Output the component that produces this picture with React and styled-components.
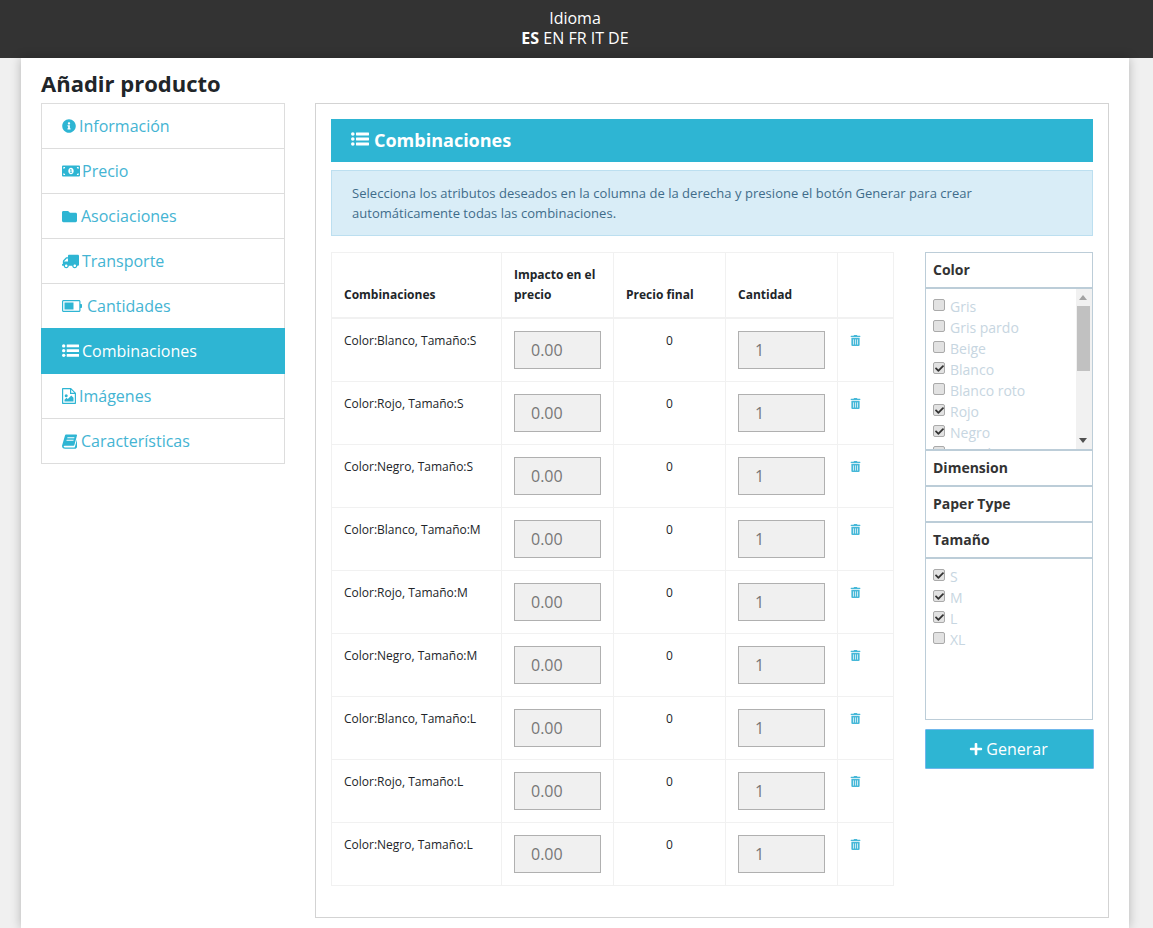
import React from "react"
import styled, { createGlobalStyle } from "styled-components"
import { FaInfoCircle, FaMoneyBillAlt, FaFolder, FaTruck, FaTrashAlt, FaPlus, FaCheck } from "react-icons/fa"

const Global = createGlobalStyle`
  html, body {
    margin: 0;
    background: #f0f0f0;
    font-family: "Open Sans", "Liberation Sans", sans-serif;
  }
  * { box-sizing: border-box; }
`

const TopBar = styled.header`
  height: 58px;
  background: #333;
  color: #fff;
  font-size: 16px;
  line-height: 20px;
  text-align: center;
  padding: 8px 3px 0 0;
  b { font-weight: 700; }
`

const Sheet = styled.main`
  width: 1108px;
  margin-left: 21px;
  height: 870px;
  background: #fff;
  padding: 11px 20px 0;
  box-shadow: 0 0 10px rgba(0, 0, 0, 0.25);
  overflow: hidden;
`

const Title = styled.h1`
  margin: 0 0 5px;
  font-size: 22px;
  line-height: 29px;
  font-weight: 700;
  color: #212529;
`

const Columns = styled.div`
  display: flex;
  align-items: flex-start;
  gap: 30px;
`

const Menu = styled.nav`
  width: 244px;
  flex: none;
`

const MenuItem = styled.a`
  display: flex;
  align-items: center;
  height: 46px;
  margin-top: -1px;
  padding-left: 20px;
  border: 1px solid ${p => (p.$active ? "#2eb5d3" : "#ddd")};
  background: ${p => (p.$active ? "#2eb5d3" : "#fff")};
  color: ${p => (p.$active ? "#fff" : "#44b4d3")};
  font-size: 16px;
  position: relative;
  z-index: ${p => (p.$active ? 1 : 0)};
  &:first-child { margin-top: 0; }
  svg { margin-right: ${p => p.$gap}px; color: ${p => (p.$active ? "#fff" : "#2eb5d3")}; flex: none; }
`

const Panel = styled.section`
  width: 794px;
  height: 815px;
  border: 1px solid #d3d3d3;
  padding: 15px;
`

const PanelHead = styled.h2`
  margin: 0 0 8px;
  height: 43px;
  display: flex;
  align-items: center;
  padding: 0 0 2px 20px;
  background: #2eb5d3;
  color: #fff;
  font-size: 18px;
  font-weight: 700;
  svg { margin-right: 5px; }
`

const Notice = styled.p`
  margin: 0 0 16px;
  height: 66px;
  padding: 12px 20px;
  background: #d9edf7;
  border: 1px solid #bcdff0;
  color: #3f6c8a;
  font-size: 13px;
  line-height: 20px;
  letter-spacing: 0.03px;
`

const Body = styled.div`
  display: flex;
  align-items: flex-start;
  justify-content: space-between;
`

const Table = styled.table`
  width: 563px;
  border-collapse: collapse;
  table-layout: fixed;
  font-size: 12px;
  color: #212529;
`

const Th = styled.th`
  height: 65px;
  padding: 12px;
  width: ${p => p.$w}px;
  border: 1px solid #f1f1f1;
  border-bottom-width: 2px;
  text-align: left;
  vertical-align: bottom;
  font-size: 12px;
  line-height: 20px;
  font-weight: 700;
`

const Td = styled.td`
  height: 63px;
  padding: 12px;
  border: 1px solid #f1f1f1;
  vertical-align: top;
  line-height: 20px;
  text-align: ${p => (p.$center ? "center" : "left")};
`

const Field = styled.input`
  display: block;
  width: 87px;
  height: 38px;
  padding: 0 16px;
  background: #f0f0f0;
  border: 1px solid #b0b0b0;
  color: #777;
  font: 16px "Open Sans", sans-serif;
`

const Trash = styled(FaTrashAlt)`
  color: #46b8d8;
  font-size: 11px;
  display: block;
  margin-top: 4px;
`

const Side = styled.aside`
  width: 168px;
  flex: none;
`

const GroupHead = styled.div`
  height: 36px;
  padding: 0 0 2px 7px;
  display: flex;
  align-items: center;
  border: 1px solid #bccdd8;
  font-size: 14px;
  font-weight: 700;
  color: #333;
`

const GroupList = styled.div`
  position: relative;
  height: 162px;
  padding: 7px 7px;
  border: 1px solid #bccdd8;
  overflow: hidden;
`

const ScrollBar = styled.div`
  position: absolute;
  top: 0;
  right: 0;
  bottom: 0;
  width: 16px;
  padding-right: 2px;
  display: flex;
  flex-direction: column;
  align-items: center;
  background: #f1f1f1;
`

const ScrollArrow = styled.svg`
  flex: none;
  margin: ${p => (p.$down ? "auto 0 6px" : "6px 0 6px")};
  fill: ${p => (p.$down ? "#505050" : "#a3a3a3")};
`

const ScrollThumb = styled.div`
  width: 13px;
  height: 65px;
  background: #c1c1c1;
`

const Option = styled.label`
  display: flex;
  align-items: center;
  height: 21px;
  font-size: 14px;
  color: #c7d6e1;
`

const Tick = styled.span`
  width: 12px;
  height: 12px;
  flex: none;
  margin: -3px 5px 0 0;
  display: flex;
  align-items: center;
  justify-content: center;
  background: #e2e2e2;
  border: 1px solid #aaa;
  border-radius: 2px;
  svg { font-size: 9px; color: #333; }
`

const Generate = styled.button`
  display: flex;
  align-items: center;
  justify-content: center;
  gap: 3px;
  width: 169px;
  height: 40px;
  margin-top: 9px;
  padding: 0 2px 0 0;
  background: #2eb5d3;
  border: 1px solid #6fb7ec;
  border-radius: 1px;
  color: #fff;
  font: 16px "Open Sans", sans-serif;
  svg { font-size: 14px; }
`

const ListIcon = ({ size = 17 }) => (
  <svg width={size} height={size * 0.78} viewBox="0 0 18 14" fill="currentColor">
    <circle cx="1.8" cy="2" r="1.8" />
    <circle cx="1.8" cy="7" r="1.8" />
    <circle cx="1.8" cy="12" r="1.8" />
    <rect x="5" y="0.5" width="13" height="3" rx="0.4" />
    <rect x="5" y="5.5" width="13" height="3" rx="0.4" />
    <rect x="5" y="10.5" width="13" height="3" rx="0.4" />
  </svg>
)

const BatteryIcon = () => (
  <svg width="20" height="12" viewBox="0 0 20 12" fill="currentColor">
    <path fillRule="evenodd" d="M1.5 0H17c.8 0 1.5.7 1.5 1.5V4h.5c.6 0 1 .4 1 1v2c0 .6-.4 1-1 1h-.5v2.500c0 .8-.7 1.500-1.500 1.500H1.500C.7 12 0 11.300 0 10.500v-9C0 .7.700 0 1.500 0zM1.200 1.200v9.600h16.100V1.200z" />
    <rect x="2.500" y="2.500" width="9" height="7" />
  </svg>
)

const ImageFileIcon = () => (
  <svg width="14" height="16" viewBox="0 0 14 16" fill="currentColor">
    <path fillRule="evenodd" d="M1 0h8l5 5v10c0 .6-.4 1-1 1H1c-.6 0-1-.4-1-1V1c0-.6.4-1 1-1zm.2 1.200v13.600h11.600V6H8V1.200zM9.200 1.800V4.800h3z" />
    <circle cx="4.200" cy="7.700" r="1.500" />
    <path d="M2.500 13.500v-1.700l2-2 1.300 1.300 3.500-3.500 2.200 2.200v3.700z" />
  </svg>
)

const BookIcon = () => (
  <svg width="15" height="15" viewBox="0 0 15 15" fill="currentColor">
    <path fillRule="evenodd" d="M4 .5h10.300c.5 0 .8.500.7 1L12.400 11c-.1.500-.5.800-1 .8H3c-.9 0-1.400.5-1.300 1 .1.500.6.800 1.300.8h9c.4 0 .7-.2.800-.6L15 5.500v7.800c-.3.900-1.100 1.500-2 1.500H3c-1.500 0-2.700-1-2.900-2.300C0 11.800.1 11.300.3 10.800L3 1.500C3.200.900 3.500.5 4 .5zM5.500 3.200l-.3 1h7l.3-1zM4.700 5.800l-.3 1h7l.3-1z" />
  </svg>
)

const TruckIcon = () => <FaTruck size={17} style={{ transform: "scaleX(-1)" }} />

const menu = [
  { label: "Información", Icon: () => <FaInfoCircle size={14} />, gap: 3 },
  { label: "Precio", Icon: () => <FaMoneyBillAlt size={18} />, gap: 2 },
  { label: "Asociaciones", Icon: () => <FaFolder size={15} />, gap: 4 },
  { label: "Transporte", Icon: TruckIcon, gap: 3 },
  { label: "Cantidades", Icon: BatteryIcon, gap: 5 },
  { label: "Combinaciones", Icon: ListIcon, gap: 3, active: true },
  { label: "Imágenes", Icon: ImageFileIcon, gap: 3 },
  { label: "Características", Icon: BookIcon, gap: 4 },
]

const rows = [
  "Color:Blanco, Tamaño:S", "Color:Rojo, Tamaño:S", "Color:Negro, Tamaño:S",
  "Color:Blanco, Tamaño:M", "Color:Rojo, Tamaño:M", "Color:Negro, Tamaño:M",
  "Color:Blanco, Tamaño:L", "Color:Rojo, Tamaño:L", "Color:Negro, Tamaño:L",
]

const colors = [
  ["Gris"], ["Gris pardo"], ["Beige"], ["Blanco", true], ["Blanco roto"], ["Rojo", true], ["Negro", true],
  ["Camel"],
]

const sizes = [["S", true], ["M", true], ["L", true], ["XL"]]

const Options = ({ items, scroll }) => (
  <GroupList>
    {items.map(([name, on]) => (
      <Option key={name}>
        <Tick>{on && <FaCheck />}</Tick>
        {name}
      </Option>
    ))}
    {scroll && (
      <ScrollBar>
        <ScrollArrow width="8" height="5" viewBox="0 0 8 5"><path d="M0 5L4 0L8 5z" /></ScrollArrow>
        <ScrollThumb />
        <ScrollArrow $down width="8" height="5" viewBox="0 0 8 5"><path d="M0 0L4 5L8 0z" /></ScrollArrow>
      </ScrollBar>
    )}
  </GroupList>
)

export default function App() {
  return (
    <>
      <Global />
      <TopBar>
        <div>Idioma</div>
        <div><b>ES</b> EN FR IT DE</div>
      </TopBar>
      <Sheet>
        <Title>Añadir producto</Title>
        <Columns>
          <Menu>
            {menu.map(({ label, Icon, active, gap }) => (
              <MenuItem key={label} $active={active} $gap={gap}>
                <Icon />
                {label}
              </MenuItem>
            ))}
          </Menu>
          <Panel>
            <PanelHead><ListIcon size={18} />Combinaciones</PanelHead>
            <Notice>
              Selecciona los atributos deseados en la columna de la derecha y presione el botón Generar para crear
              automáticamente todas las combinaciones.
            </Notice>
            <Body>
              <Table>
                <thead>
                  <tr>
                    <Th $w={170}>Combinaciones</Th>
                    <Th $w={112}>Impacto en el precio</Th>
                    <Th $w={112}>Precio final</Th>
                    <Th $w={112}>Cantidad</Th>
                    <Th $w={56} />
                  </tr>
                </thead>
                <tbody>
                  {rows.map(row => (
                    <tr key={row}>
                      <Td>{row}</Td>
                      <Td><Field readOnly value="0.00" /></Td>
                      <Td $center>0</Td>
                      <Td><Field readOnly value="1" /></Td>
                      <Td><Trash /></Td>
                    </tr>
                  ))}
                </tbody>
              </Table>
              <Side>
                <GroupHead>Color</GroupHead>
                <Options items={colors} scroll />
                <GroupHead>Dimension</GroupHead>
                <GroupHead>Paper Type</GroupHead>
                <GroupHead>Tamaño</GroupHead>
                <Options items={sizes} />
                <Generate><FaPlus />Generar</Generate>
              </Side>
            </Body>
          </Panel>
        </Columns>
      </Sheet>
    </>
  )
}
